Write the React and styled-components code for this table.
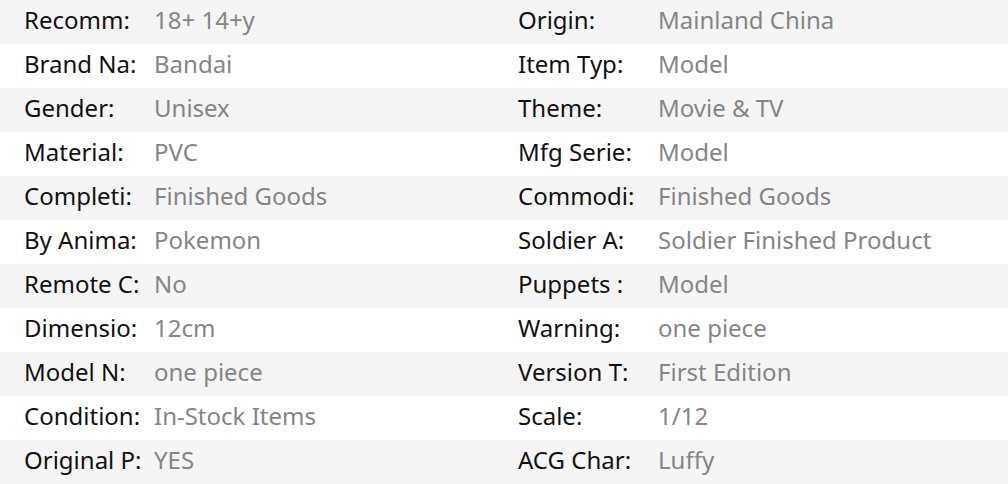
import React from "react";
import styled, { createGlobalStyle } from "styled-components";

const Global = createGlobalStyle`
  html, body { margin: 0; padding: 0; background: #fff; }
  body { font-family: "Noto Sans", "Open Sans", sans-serif; }
`;

const Table = styled.div`
  width: 1008px;
  display: flex;
  flex-direction: column;
`;

const Row = styled.div`
  box-sizing: border-box;
  height: 44px;
  display: grid;
  grid-template-columns: 131px 363px 141px 1fr;
  align-items: start;
  padding: 0 0 4px 24px;
  background: ${(p) => (p.$shade ? "#f5f5f5" : "#ffffff")};
  font-size: 24px;
  line-height: 40px;
  white-space: nowrap;
`;

const Label = styled.span`
  color: #111;
  overflow: hidden;
`;

const Value = styled.span`
  color: #858585;
  overflow: hidden;
  margin-left: -1px;
`;

const data = [
  ["Recomm:", "18+ 14+y", "Origin:", "Mainland China"],
  ["Brand Na:", "Bandai", "Item Typ:", "Model"],
  ["Gender:", "Unisex", "Theme:", "Movie & TV"],
  ["Material:", "PVC", "Mfg Serie:", "Model"],
  ["Completi:", "Finished Goods", "Commodi:", "Finished Goods"],
  ["By Anima:", "Pokemon", "Soldier A:", "Soldier Finished Product"],
  ["Remote C:", "No", "Puppets :", "Model"],
  ["Dimensio:", "12cm", "Warning:", "one piece"],
  ["Model N:", "one piece", "Version T:", "First Edition"],
  ["Condition:", "In-Stock Items", "Scale:", "1/12"],
  ["Original P:", "YES", "ACG Char:", "Luffy"],
];

export default function App() {
  return (
    <>
      <Global />
      <Table>
        {data.map((r, i) => (
          <Row key={i} $shade={i % 2 === 0}>
            <Label>{r[0]}</Label>
            <Value>{r[1]}</Value>
            <Label>{r[2]}</Label>
            <Value>{r[3]}</Value>
          </Row>
        ))}
      </Table>
    </>
  );
}
